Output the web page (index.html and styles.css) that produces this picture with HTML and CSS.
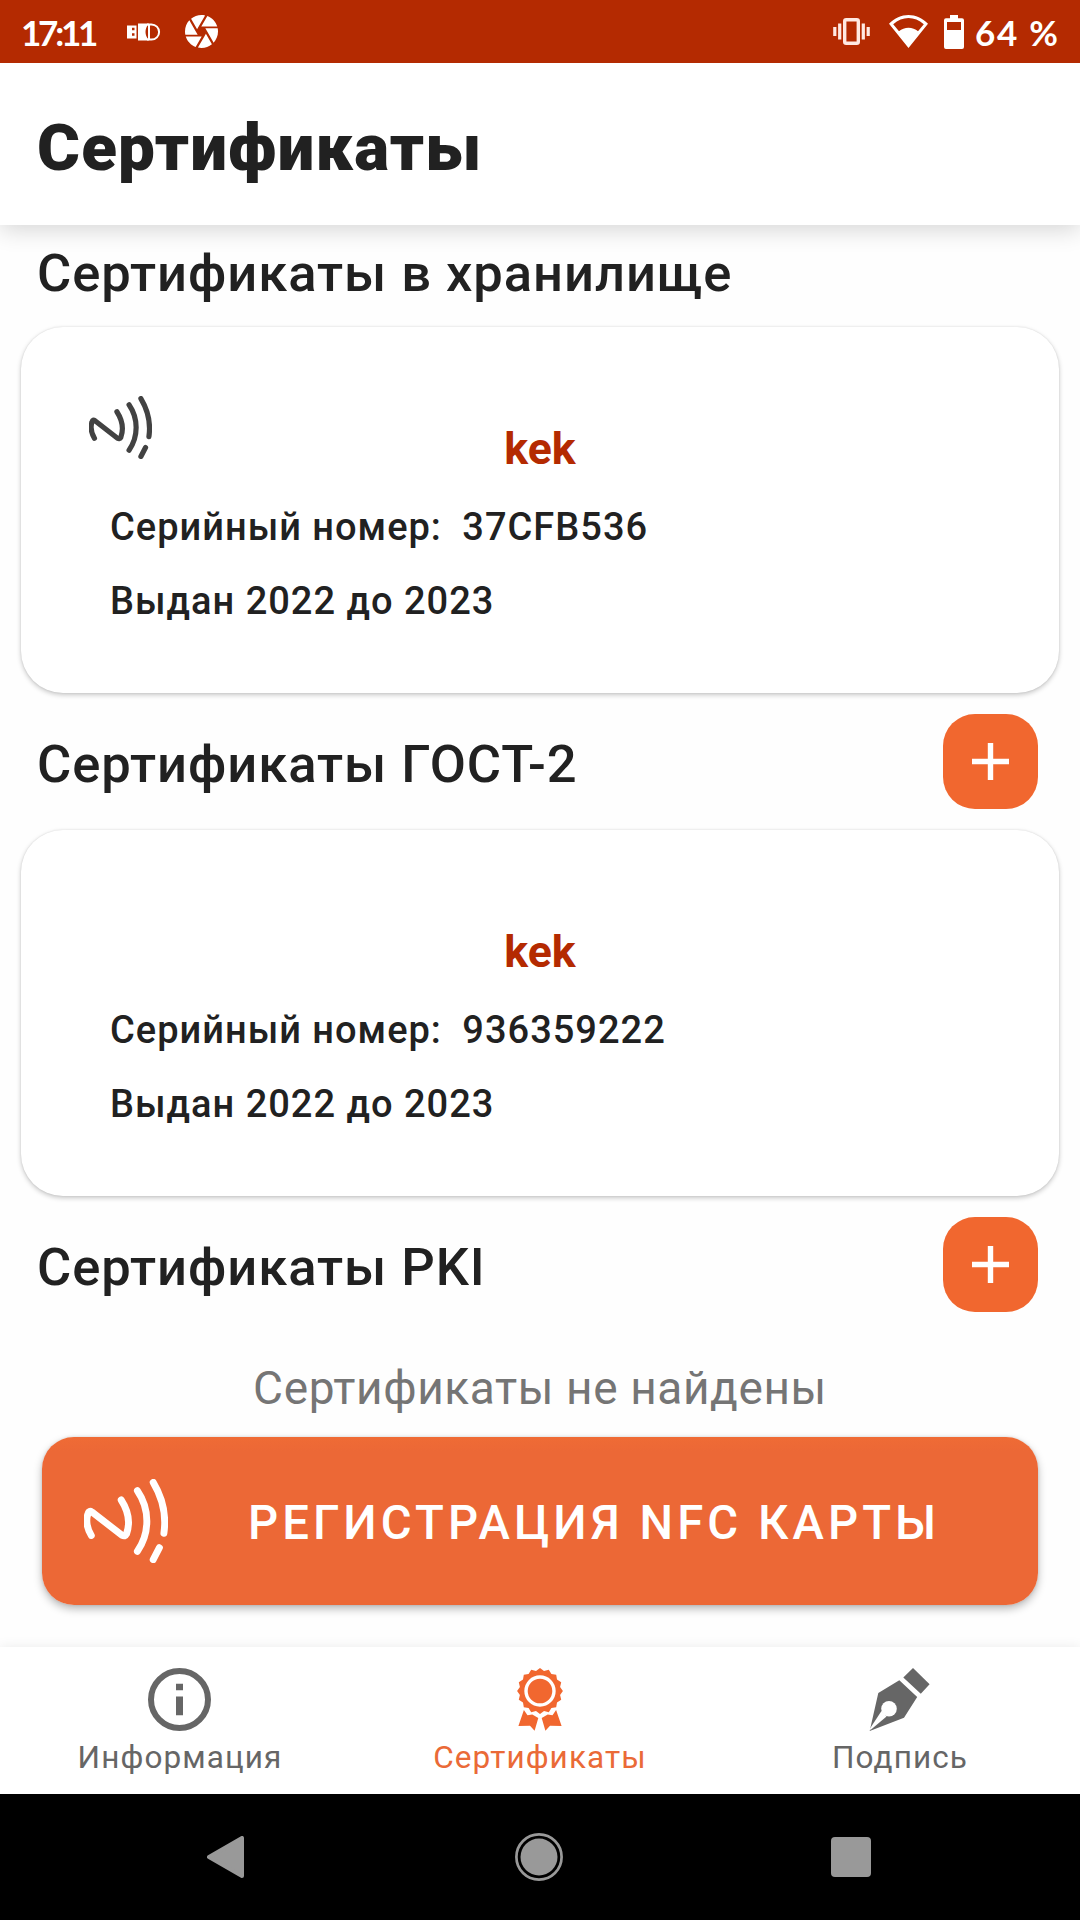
FILE: index.html
```html
<!DOCTYPE html>
<html lang="ru">
<head>
<meta charset="utf-8">
<title>Сертификаты</title>
<link rel="stylesheet" href="styles.css">
</head>
<body>
<svg class="defs" width="0" height="0">
  <symbol id="nfc" viewBox="0 0 84 84">
    <g fill="none" stroke="currentColor" stroke-width="6.9" stroke-linecap="round" stroke-linejoin="round">
      <path d="M7.3 56.5C2.8 49 2 40.500 4 34.500Q5 31 8 33L38 56.300Q41 58 42.500 55C46 45 45 33 37.200 21"/>
      <path d="M53.400 11.700C66 30 66 54 53.400 72.300"/>
      <path d="M69.200 3.400C78 18 82.500 36 79.900 54.300"/>
      <path d="M75.400 68.700L69.200 80.600"/>
    </g>
  </symbol>
  <symbol id="plus" viewBox="0 0 37 37">
    <path d="M18.500 0V37M0 18.500H37" stroke="currentColor" stroke-width="5.400"/>
  </symbol>
</svg>
<div class="screen">
  <div class="statusbar">
    <span class="clock">17:11</span>
    <svg class="ic-usb" viewBox="0 0 34 18" width="34" height="18">
      <path fill="#fff" fill-rule="evenodd" d="M0 2.500H9.500V15.500H0ZM5 4.800V7.300H7.500V4.800ZM5 10.300V12.800H7.500V10.300Z"/>
      <path fill="#fff" d="M11 .500H22Q18.500 4.500 18.500 9T22 17.500H11Z"/>
      <path fill="none" stroke="#fff" stroke-width="2" d="M20 1.400H24.500A7.600 7.600 0 0 1 24.500 16.600H20M22 2V16"/>
    </svg>
    <svg class="ic-shutter" viewBox="2 2 20 20" width="33" height="33"><path fill="#fff" d="M9.400 10.500l4.770-8.260C13.470 2.090 12.750 2 12 2c-2.400 0-4.600.85-6.320 2.250l3.660 6.350.06-.1zM21.540 9c-.92-2.920-3.150-5.260-6-6.340L11.880 9h9.660zm.26 1h-7.490l.29.5 4.760 8.250C21 16.970 22 14.610 22 12c0-.69-.07-1.350-.2-2zM8.540 12l-3.900-6.750C3.010 7.030 2 9.390 2 12c0 .69.07 1.350.2 2h7.490l-1.150-2zm-6.080 3c.92 2.920 3.150 5.260 6 6.340L12.120 15H2.460zm11.270 0l-3.900 6.760c.7.15 1.420.24 2.170.24 2.400 0 4.600-.85 6.320-2.250l-3.660-6.350-.93 1.600z"/></svg>
    <span class="spacer"></span>
    <svg class="ic-vibrate" viewBox="0 0 37 27" width="37" height="27">
      <rect x="11.700" y="1.700" width="13.600" height="23.600" rx="1.500" fill="none" stroke="#ffe9e2" stroke-width="3.400"/>
      <path stroke="#ffe9e2" stroke-width="3.200" d="M1.800 9V18M6.700 5.500V21.500M30.300 5.500V21.500M35.200 9V18"/>
    </svg>
    <svg class="ic-wifi" viewBox="0 0 39 33" width="39" height="33">
      <path fill="#fff" fill-rule="evenodd" d="M19.500 33L0 8.800C11-2.800 28-2.800 39 8.800ZM10 16.200C15 11.500 24 11.500 29 16.200L34.800 9.200C25.500.900 13.500.900 4.200 9.200Z"/>
    </svg>
    <svg class="ic-battery" viewBox="0 0 20 34" width="20" height="34">
      <path fill="#fff" fill-rule="evenodd" d="M6 0H14V3.200H18Q20 3.200 20 5.200V32Q20 34 18 34H2Q0 34 0 32V5.200Q0 3.200 2 3.200H6ZM3 7V15H17V7Z"/>
    </svg>
    <span class="charge">64 %</span>
  </div>

  <header class="appbar"><h1>Сертификаты</h1></header>

  <main class="content">
    <div class="section section-first"><h2>Сертификаты в хранилище</h2></div>
    <article class="card">
      <div class="card-head">
        <svg class="card-nfc"><use href="#nfc"/></svg>
        <h3>kek</h3>
      </div>
      <p class="row"><span>Серийный номер:</span><span>37CFB536</span></p>
      <p class="row">Выдан 2022 до 2023</p>
    </article>

    <div class="section"><h2>Сертификаты ГОСТ-2</h2><button class="add"><svg><use href="#plus"/></svg></button></div>
    <article class="card">
      <div class="card-head"><h3>kek</h3></div>
      <p class="row"><span>Серийный номер:</span><span>936359222</span></p>
      <p class="row">Выдан 2022 до 2023</p>
    </article>

    <div class="section"><h2>Сертификаты PKI</h2><button class="add"><svg><use href="#plus"/></svg></button></div>
    <p class="empty">Сертификаты не найдены</p>

    <button class="register">
      <svg><use href="#nfc"/></svg>
      <span>РЕГИСТРАЦИЯ NFC КАРТЫ</span>
    </button>
  </main>

  <nav class="tabs">
    <a class="tab">
      <svg viewBox="0 0 63 63" width="63" height="63">
        <circle cx="31.500" cy="31.500" r="28.500" fill="none" stroke="currentColor" stroke-width="6"/>
        <path fill="currentColor" d="M28 15.700H35V22.300H28ZM28 28.500H35V47.300H28Z"/>
      </svg>
      <span>Информация</span>
    </a>
    <a class="tab tab-active">
      <svg class="badge" viewBox="0 0 46 63" width="46" height="63">
        <path class="seal" d="M23 .1L27 2.900 31.800 1.800 34.400 6 39.200 6.800 40 11.600 44.200 14.200 43.100 19 45.900 23 43.100 27 44.200 31.800 40 34.400 39.200 39.200 34.400 40 31.800 44.200 27 43.100 23 45.900 19 43.100 14.200 44.200 11.600 40 6.800 39.200 6 34.400 1.800 31.800 2.900 27 .1 23 2.900 19 1.800 14.200 6 11.600 6.800 6.800 11.600 6 14.200 1.800 19 2.900Z"/>
        <circle cx="23" cy="23" r="14" fill="none" stroke="#fff" stroke-width="3.400"/>
        <path class="seal" d="M6.900 42L10.500 47.300 15.300 46.500 21.300 50 17.600 62.700 13 57.800 1.400 58ZM39.100 42L35.500 47.300 30.700 46.500 24.700 50 28.400 62.700 33 57.800 44.600 58Z"/>
      </svg>
      <span>Сертификаты</span>
    </a>
    <a class="tab">
      <svg viewBox="0 0 61 63" width="61" height="63">
        <path fill="currentColor" d="M44 0L60.600 16.200 51.800 25.800 34.300 9.500ZM30.300 12.300L48.200 29 35 49.700.700 63 9.300 25Z"/>
        <circle cx="20" cy="40.700" r="7.800" fill="#fff"/>
        <path fill="#fff" d="M12.500 43L17.500 48.500 1.500 62 .800 60.800Z"/>
      </svg>
      <span>Подпись</span>
    </a>
  </nav>

  <div class="sysnav">
    <svg viewBox="0 0 37 42" width="37" height="42"><path fill="#999" stroke="#999" stroke-width="4" stroke-linejoin="round" d="M2 21L35 2V40Z"/></svg>
    <svg class="home" viewBox="0 0 48 48" width="48" height="48"><circle cx="24" cy="24" r="22.600" fill="none" stroke="#999" stroke-width="2.700"/><circle cx="24" cy="24" r="18.500" fill="#999"/></svg>
    <svg viewBox="0 0 40 40" width="40" height="40"><rect width="40" height="40" rx="4" fill="#999"/></svg>
  </div>
</div>
</body>
</html>
```
FILE: styles.css
```css
* { box-sizing: border-box; }
body, h1, h2, h3, p { margin: 0; }
body { background: #fefefe; font-family: Roboto, sans-serif; color: #212121; }
button { border: 0; padding: 0; font: inherit; }
svg { display: block; flex: none; }
.defs { position: absolute; }

.screen { width: 1080px; height: 1920px; display: flex; flex-direction: column; overflow: hidden; }

/* Status bar */
.statusbar {
  position: relative; z-index: 2;
  height: 63px; flex: none; display: flex; align-items: center;
  background: #b42a01; color: #fff; padding: 0 22px 0 21px;
  font: 700 35px/63px Lato, sans-serif;
}
.clock { width: 106px; letter-spacing: -3.2px; padding-top: 1px; white-space: nowrap; }
.ic-shutter { margin-left: 24px; }
.spacer { flex: 1; }
.ic-vibrate { margin-right: 19px; }
.ic-wifi { margin-right: 16px; }
.ic-battery { margin-right: 11px; }
.charge { width: 83px; padding-top: 1px; letter-spacing: 1.7px; white-space: nowrap; }

/* App bar */
.appbar {
  position: relative; z-index: 1; height: 162px; flex: none;
  display: flex; align-items: center; padding: 7px 37px 0; background: #fff;
  box-shadow: 0 5px 22px rgba(0, 0, 0, .16);
}
.appbar h1 { font-size: 65.6px; font-weight: 900; letter-spacing: 1.15px; }

/* Content */
.content { flex: 1; display: flex; flex-direction: column; }
.section {
  height: 137px; display: flex; align-items: center; justify-content: space-between;
  padding: 0 42px 0 37px;
}
.section h2 { font-size: 52.5px; font-weight: 500; letter-spacing: .95px; padding-top: 5px; }
.section-first { height: 102px; padding-bottom: 11px; }
.add {
  width: 95px; height: 95px; border-radius: 32px; background: #f1672f; color: #fff;
  display: grid; place-items: center;
}
.add svg { width: 37px; height: 37px; }

.card {
  height: 366px; margin: 0 21px; padding: 68.5px 68px 0; border-radius: 42px; background: #fff;
  box-shadow: 0 2px 5px rgba(0, 0, 0, .22), 0 0 2px rgba(0, 0, 0, .1);
}
.card-head { height: 94.5px; display: grid; grid-template-columns: 1fr auto 1fr; align-items: start; }
.card-nfc { width: 63px; height: 63px; color: #424242; }
.card-head h3 {
  grid-column: 2; margin-top: 26px; line-height: 55px;
  font-size: 44.6px; font-weight: 700; color: #b42a01;
}
.row {
  display: flex; gap: 20.5px; padding-left: 21px;
  font-size: 38px; line-height: 74px; font-weight: 500; letter-spacing: 1px;
}

.empty {
  height: 104px; padding-top: 7px; text-align: center;
  font-size: 46px; line-height: 96px; letter-spacing: .6px; color: #757575;
}

.register {
  height: 168px; margin: 0 42px; padding-left: 42px; border-radius: 32px;
  display: flex; align-items: center; color: #fff;
  background: linear-gradient(#ef6b35, #ec6836 14px);
  box-shadow: 0 4px 9px rgba(0, 0, 0, .27), 0 0 3px rgba(0, 0, 0, .12);
}
.register svg { width: 84px; height: 84px; }
.register span { margin-left: 80px; padding-top: 3px; font-size: 47.25px; font-weight: 500; letter-spacing: 4.07px; white-space: nowrap; }

/* Bottom tabs */
.tabs {
  height: 147px; flex: none; display: grid; grid-template-columns: repeat(3, 1fr);
  background: #fff; box-shadow: 0 0 12px rgba(0, 0, 0, .08);
}
.tab {
  display: flex; flex-direction: column; align-items: center; padding-top: 21px; color: #666;
  font-size: 31.5px; line-height: 37px; letter-spacing: 1.1px;
}
.tab svg { margin-right: 1px; }
.tab span { margin-top: 7.500px; }
.tab-active { color: #ea6a37; }
.seal { fill: #f1672f; }

/* System navigation */
.sysnav {
  height: 126px; flex: none; display: flex; align-items: center;
  justify-content: space-between; padding: 0 209px 0 207px; background: #000;
}
.home { margin-left: 3px; }
```
